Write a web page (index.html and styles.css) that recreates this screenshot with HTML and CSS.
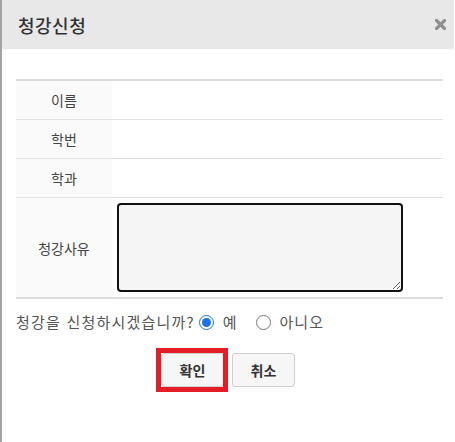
FILE: index.html
```html
<!DOCTYPE html>
<html lang="ko">
<head>
<meta charset="utf-8">
<title>청강신청</title>
<link rel="stylesheet" href="styles.css">
</head>
<body>
<div class="dialog">
  <div class="dialog-header">
    <h1 class="dialog-title">청강신청</h1>
    <button class="dialog-close" type="button" aria-label="닫기">
      <svg width="11" height="11" viewBox="0 0 11 11"><path d="M1.5 1.5 L9.5 9.5 M9.5 1.5 L1.5 9.5" stroke="#8f8f8f" stroke-width="3.2" stroke-linecap="square" fill="none"/></svg>
    </button>
  </div>
  <div class="dialog-body">
    <table class="form-table">
      <tr class="row">
        <th class="label">이름</th>
        <td class="value"></td>
      </tr>
      <tr class="row">
        <th class="label">학번</th>
        <td class="value"></td>
      </tr>
      <tr class="row">
        <th class="label">학과</th>
        <td class="value"></td>
      </tr>
      <tr class="row row-last">
        <th class="label">청강사유</th>
        <td class="value"><textarea class="reason"></textarea></td>
      </tr>
    </table>
    <div class="question">
      <span class="question-text">청강을 신청하시겠습니까?</span>
      <label class="choice choice-yes"><input class="radio" type="radio" name="apply" checked><span>예</span></label>
      <label class="choice"><input class="radio" type="radio" name="apply"><span>아니오</span></label>
    </div>
    <div class="actions">
      <button class="btn btn-marked" type="button">확인</button>
      <button class="btn" type="button">취소</button>
    </div>
  </div>
</div>
</body>
</html>
```

FILE: styles.css
```css
html, body {
  margin: 0;
  padding: 0;
  background: #ffffff;
}

body {
  font-family: "Noto Sans CJK KR", "Noto Sans", sans-serif;
  color: #444;
}

.dialog {
  width: 454px;
  height: 442px;
  border-left: 2px solid #a3a3a3;
  box-sizing: border-box;
  background: #fff;
}

.dialog-header {
  height: 49px;
  background: #e8e8e8;
  display: flex;
  align-items: center;
  justify-content: space-between;
  padding: 0 8px 0 16px;
}

.dialog-title {
  margin: 0;
  font-size: 18px;
  font-weight: 500;
  color: #333;
  line-height: 24px;
  letter-spacing: 0.5px;
}

.dialog-close {
  border: 0;
  background: transparent;
  padding: 0;
  width: 11px;
  height: 11px;
  display: flex;
}

.dialog-body {
  padding: 30px 11px 0 14px;
}

.form-table {
  width: 100%;
  border-collapse: collapse;
  border-top: 2px solid #dcdcdc;
}

.row {
  border-bottom: 1px solid #e2e2e2;
}

.row-last {
  border-bottom: 2px solid #dcdcdc;
}

.label {
  width: 96px;
  height: 38px;
  padding: 0;
  background: #fafafa;
  font-size: 14px;
  font-weight: 400;
  color: #444;
  text-align: center;
  vertical-align: middle;
}

.value {
  padding: 5px 0 5px 5px;
  vertical-align: middle;
}

.reason {
  display: block;
  width: 286px;
  height: 89px;
  box-sizing: border-box;
  border: 2px solid #111;
  border-radius: 4px;
  background: #f5f5f5;
  outline: none;
  resize: vertical;
  margin: 0;
}

.question {
  display: flex;
  align-items: center;
  margin-top: 12px;
  font-size: 15px;
  line-height: 22px;
  color: #555;
}

.question-text {
  letter-spacing: 1.2px;
}

.choice {
  display: flex;
  align-items: center;
  margin-left: 18px;
  letter-spacing: 1px;
}

.choice-yes {
  margin-left: 4px;
}

.radio {
  width: 15px;
  height: 15px;
  margin: 0 9px 0 0;
  accent-color: #1a73e8;
}

.actions {
  display: flex;
  justify-content: center;
  gap: 8px;
  margin-top: 20px;
  padding-right: 3px;
}

.btn {
  position: relative;
  width: 63px;
  height: 34px;
  border: 1px solid #cfcfcf;
  border-radius: 3px;
  background: #f6f6f6;
  font-family: "Noto Sans CJK KR", "Noto Sans", sans-serif;
  font-size: 14px;
  font-weight: 700;
  color: #333;
  padding: 0;
}

.btn-marked::after {
  content: "";
  position: absolute;
  top: -6px;
  left: -6px;
  right: -5px;
  bottom: -6px;
  border: 5px solid #e31e26;
}
```
